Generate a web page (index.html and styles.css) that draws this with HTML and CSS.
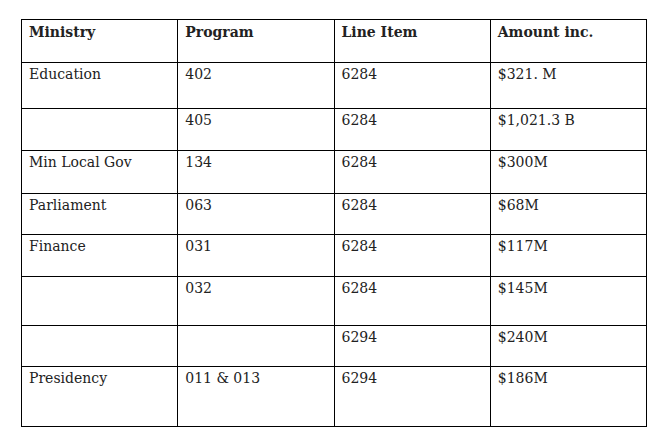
FILE: index.html
```html
<!DOCTYPE html>
<html>
<head>
<meta charset="utf-8">
<link rel="stylesheet" href="styles.css">
</head>
<body>
<table class="budget">
  <colgroup><col class="c"><col class="c"><col class="c"><col class="c"></colgroup>
  <tr class="r-head"><th>Ministry</th><th>Program</th><th>Line Item</th><th>Amount inc.</th></tr>
  <tr class="r1"><td>Education</td><td>402</td><td>6284</td><td>$321. M</td></tr>
  <tr class="r2"><td></td><td>405</td><td>6284</td><td>$1,021.3 B</td></tr>
  <tr class="r3"><td>Min Local Gov</td><td>134</td><td>6284</td><td>$300M</td></tr>
  <tr class="r4"><td>Parliament</td><td>063</td><td>6284</td><td>$68M</td></tr>
  <tr class="r5"><td>Finance</td><td>031</td><td>6284</td><td>$117M</td></tr>
  <tr class="r6"><td></td><td>032</td><td>6284</td><td>$145M</td></tr>
  <tr class="r7"><td></td><td></td><td>6294</td><td>$240M</td></tr>
  <tr class="r8"><td>Presidency</td><td>011 &amp; 013</td><td>6294</td><td>$186M</td></tr>
</table>
</body>
</html>
```
FILE: styles.css
```css
html, body {
  margin: 0;
  padding: 0;
  background: #fff;
}
body {
  padding: 19px 0 0 21px;
  font-family: "DejaVu Serif", "Liberation Serif", serif;
  color: #222;
}
.budget {
  border-collapse: collapse;
  table-layout: fixed;
  width: 626px;
}
.budget .c { width: 25%; }
.budget th,
.budget td {
  border: 1.5px solid #000;
  vertical-align: top;
  text-align: left;
  padding: 2px 8px 0 7px;
  font-size: 14px;
  line-height: 18px;
  box-sizing: border-box;
}
.budget th {
  font-weight: bold;
  padding-top: 3px;
}
.r-head { height: 43px; }
.r1 { height: 46px; }
.r2 { height: 42px; }
.r3 { height: 43px; }
.r4 { height: 41px; }
.r5 { height: 42px; }
.r6 { height: 49px; }
.r7 { height: 41px; }
.r8 { height: 60px; }
```
